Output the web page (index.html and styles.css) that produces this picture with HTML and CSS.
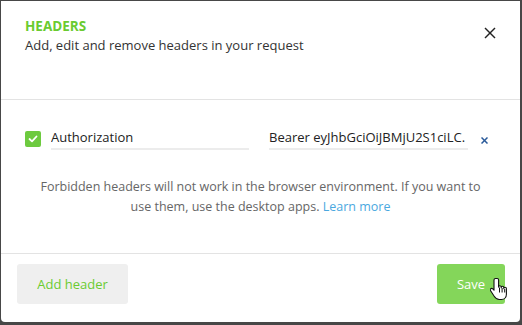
FILE: index.html
```html
<!DOCTYPE html>
<html lang="en">
<head>
    <meta charset="UTF-8">
    <title>Headers</title>
    <link rel="stylesheet" href="styles.css">
</head>
<body>
    <div class="modal">
        <!-- Title -->
        <div class="modal-header">
            <div class="titles">
                <div class="modal-title">HEADERS</div>
                <div class="modal-subtitle">Add, edit and remove headers in your request</div>
            </div>
            <button class="close-btn" aria-label="Close">
                <svg width="12" height="12" viewBox="0 0 12 12" fill="none" stroke="#222" stroke-width="1.4">
                    <line x1="1" y1="1" x2="11" y2="11"></line>
                    <line x1="11" y1="1" x2="1" y2="11"></line>
                </svg>
            </button>
        </div>

        <!-- Header rows -->
        <div class="modal-body">
            <div class="header-row">
                <span class="checkbox">
                    <svg width="10" height="8" viewBox="0 0 10 8" fill="none" stroke="#fff" stroke-width="1.8" stroke-linecap="round" stroke-linejoin="round">
                        <polyline points="1.5 4 4 6.3 8.5 1.5"></polyline>
                    </svg>
                </span>
                <div class="field field-key">Authorization</div>
                <div class="field field-value">Bearer eyJhbGciOiJBMjU2S1ciLC.</div>
                <button class="remove-btn" aria-label="Remove">
                    <svg width="7" height="7" viewBox="0 0 7 7" fill="none" stroke="#2a5a9a" stroke-width="1.5">
                        <line x1="0.5" y1="0.5" x2="6.5" y2="6.5"></line>
                        <line x1="6.5" y1="0.5" x2="0.5" y2="6.5"></line>
                    </svg>
                </button>
            </div>

            <p class="note">
                Forbidden headers will not work in the browser environment. If you want to
                use them, use the desktop apps. <a href="#">Learn more</a>
            </p>
        </div>

        <!-- Footer -->
        <div class="modal-footer">
            <button class="btn btn-secondary">Add header</button>
            <button class="btn btn-primary">
                Save
                <svg class="cursor" width="18" height="24" viewBox="0 0 18 24">
                    <path d="M5.5 1.5c-.9 0-1.5.7-1.5 1.5v10.2l-1.2-1.3c-.7-.7-1.7-.7-2.2 0-.5.5-.4 1.3 0 1.9l3.6 5.5c1 1.6 2.6 3.2 5 3.2h2.3c2.9 0 4.9-2.3 4.9-5.3v-5.6c0-.8-.6-1.4-1.3-1.4-.7 0-1.3.6-1.3 1.4v-.9c0-.8-.6-1.4-1.3-1.4-.7 0-1.3.6-1.3 1.4v-.6c0-.8-.6-1.4-1.3-1.4-.7 0-1.3.6-1.3 1.4V3c0-.8-.6-1.5-1.4-1.5z" fill="#fff" stroke="#111" stroke-width="1.1" stroke-linejoin="round"></path>
                    <path d="M9.5 10.5v5M12.1 11v4.5M14.7 12v3.5" stroke="#111" stroke-width="1" fill="none"></path>
                </svg>
            </button>
        </div>
    </div>
</body>
</html>
```

FILE: styles.css
```css
body {
    margin: 0;
    background: #474747;
    font-family: 'Open Sans', 'Noto Sans', sans-serif;
}

/* Dialog */
.modal {
    margin: 1px;
    width: 519px;
    height: 321px;
    background: #fff;
    border-radius: 0 0 4px 4px;
    display: flex;
    flex-direction: column;
}

.modal-header {
    height: 98px;
    border-bottom: 1px solid #e3e3e3;
    display: flex;
    align-items: flex-start;
    justify-content: space-between;
    padding: 0 23px 0 24px;
}

.titles {
    padding-top: 16px;
}

.modal-title {
    color: #6acb31;
    font-weight: 700;
    font-size: 13.5px;
    line-height: 18px;
}

.modal-subtitle {
    color: #333;
    font-size: 13px;
    line-height: 20px;
}

.close-btn {
    margin-top: 25px;
    width: 14px;
    height: 14px;
    padding: 0;
    border: none;
    background: none;
    display: flex;
    align-items: center;
    justify-content: center;
}

/* Body */
.modal-body {
    flex: 1;
    padding-top: 29px;
}

.header-row {
    display: flex;
    align-items: center;
    height: 20px;
    padding-left: 24px;
}

.checkbox {
    width: 16px;
    height: 16px;
    border-radius: 2px;
    background: #6dca3f;
    display: flex;
    align-items: center;
    justify-content: center;
    margin-right: 10px;
}

.field {
    width: 198px;
    height: 20px;
    border-bottom: 2px solid #ececec;
    color: #222;
    font-size: 13px;
    line-height: 18px;
    white-space: nowrap;
    overflow: hidden;
}

.field-key {
    margin-right: 20px;
}

.field-value {
    width: 199px;
}

.remove-btn {
    margin-left: 13px;
    margin-top: 3px;
    padding: 0;
    border: none;
    background: none;
    display: flex;
}

.note {
    max-width: 450px;
    margin: 28px auto 0;
    text-align: center;
    color: #666;
    font-size: 12.5px;
    line-height: 20px;
}

.note a {
    color: #4aa8e0;
    text-decoration: none;
}

/* Footer */
.modal-footer {
    height: 58px;
    border-top: 1px solid #e3e3e3;
    display: flex;
    align-items: flex-start;
    justify-content: space-between;
    padding: 10px 15px 0 16px;
}

.btn {
    height: 40px;
    border: none;
    border-radius: 3px;
    font-family: inherit;
    font-size: 13px;
    position: relative;
}

.btn-secondary {
    width: 111px;
    background: #efefef;
    color: #6acb31;
}

.btn-primary {
    width: 68px;
    background: #84d65a;
    color: #fff;
}

/* mouse pointer captured in the screenshot */
.cursor {
    position: absolute;
    left: 53px;
    top: 13px;
}
```
